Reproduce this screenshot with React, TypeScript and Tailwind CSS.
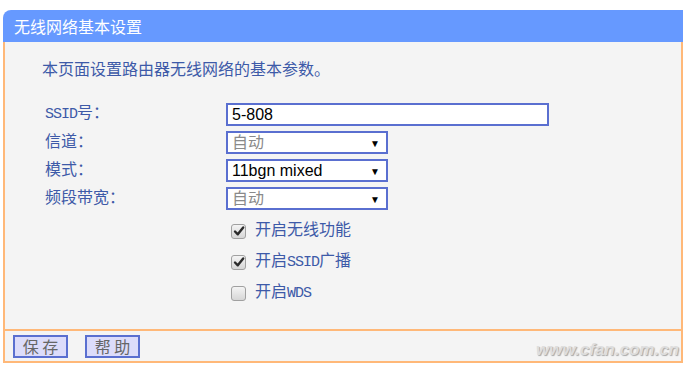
const labelFont = {
  fontFamily: '"Liberation Mono", "Noto Sans CJK SC", monospace',
};

// Latin parts of the labels are narrower in the original (half-width glyphs)
const Latin = ({ children }: { children: string }) => (
  <span className="text-[15px] tracking-[-1px]">{children}</span>
);

const Check = ({ checked }: { checked: boolean }) => (
  <span className="relative flex h-[15px] w-[15px] items-center justify-center rounded-[3px] border border-[#a0a0a0] bg-gradient-to-b from-[#f4f4f4] to-[#d6d6d6]">
    {checked && (
      <svg viewBox="0 0 12 12" className="h-[12px] w-[12px]">
        <path d="M2 6.5 L4.8 9.3 L10.2 2.4" fill="none" stroke="#2b2b2b" strokeWidth="2.4" strokeLinecap="round" strokeLinejoin="round" />
      </svg>
    )}
  </span>
);

const SelectBox = ({ value, muted }: { value: string; muted?: boolean }) => (
  <div className="flex h-[23px] w-[162px] items-center justify-between border-2 border-[#5a6fd0] bg-white pl-[4px] pr-[6px]">
    <span
      className={`text-[16px] leading-[20px] ${muted ? "text-[#8a8a8a]" : "text-black"}`}
      style={{ fontFamily: '"Liberation Sans", "Noto Sans CJK SC", sans-serif' }}
    >
      {value}
    </span>
    <span className="text-[10px] leading-none text-black">▼</span>
  </div>
);

export default function App() {
  const rows = [
    { label: "信道：", value: "自动", muted: true },
    { label: "模式：", value: "11bgn mixed", muted: false },
    { label: "频段带宽：", value: "自动", muted: true },
  ];

  return (
    <div className="h-[365px] w-[685px] bg-white pl-[3px] pt-[10px]">
      <div className="w-[680px]">
        <div className="flex h-[32px] items-center rounded-tl-[8px] bg-[#6699ff] pl-[11px]">
          <span className="text-[16px] leading-[20px] text-white" style={{ fontFamily: '"Noto Sans CJK SC", sans-serif' }}>
            无线网络基本设置
          </span>
        </div>

        <div className="h-[287px] border-x-2 border-[#ffb878] bg-[#f4f4f4]">
          <p className="pl-[37px] pt-[19px] text-[16px] leading-[20px] text-[#3d5aa8]" style={labelFont}>
            本页面设置路由器无线网络的基本参数。
          </p>

          <div className="mt-[22px] flex flex-col gap-[5px]">
            <div className="flex items-center">
              <span className="w-[221px] pl-[40px] text-[16px] leading-[20px] text-[#3d5aa8]" style={labelFont}>
                <Latin>SSID</Latin>号：
              </span>
              <div className="flex h-[23px] w-[323px] items-center border-2 border-[#5a6fd0] bg-white pl-[4px]">
                <span className="text-[16px] leading-[20px] text-black" style={{ fontFamily: '"Liberation Sans", sans-serif' }}>
                  5-808
                </span>
              </div>
            </div>
            {rows.map((r) => (
              <div key={r.label} className="flex items-center">
                <span className="w-[221px] pl-[40px] text-[16px] leading-[20px] text-[#3d5aa8]" style={labelFont}>
                  {r.label}
                </span>
                <SelectBox value={r.value} muted={r.muted} />
              </div>
            ))}
          </div>

          <div className="mt-[12px] flex flex-col gap-[13px] pl-[226px] text-[16px] leading-[20px] text-[#3d5aa8]" style={labelFont}>
            <div className="flex h-[18px] items-center gap-[9px]">
              <Check checked />
              <span>开启无线功能</span>
            </div>
            <div className="flex h-[18px] items-center gap-[9px]">
              <Check checked />
              <span>
                开启<Latin>SSID</Latin>广播
              </span>
            </div>
            <div className="flex h-[18px] items-center gap-[9px]">
              <Check checked={false} />
              <span>
                开启<Latin>WDS</Latin>
              </span>
            </div>
          </div>
        </div>

        <div className="flex h-[34px] items-center justify-between border-2 border-[#ffb878] bg-[#f4f4f4] pl-[8px] pr-[2px]">
          <div className="flex gap-[17px]">
            {["保 存", "帮 助"].map((b) => (
              <div
                key={b}
                className="flex h-[23px] w-[55px] items-center justify-center border-2 border-[#5a6fd0] bg-[#dcdcfa] text-[16px] leading-[20px] text-[#666]"
                style={{ fontFamily: '"Noto Sans CJK SC", sans-serif' }}
              >
                {b}
              </div>
            ))}
          </div>
          <span
            className="pt-[8px] text-[17px] font-bold italic text-[#dedede]"
            style={{ fontFamily: '"Liberation Sans", sans-serif', textShadow: "1px 1px 1px #a8a8a8" }}
          >
            www.cfan.com.cn
          </span>
        </div>
      </div>
    </div>
  );
}
